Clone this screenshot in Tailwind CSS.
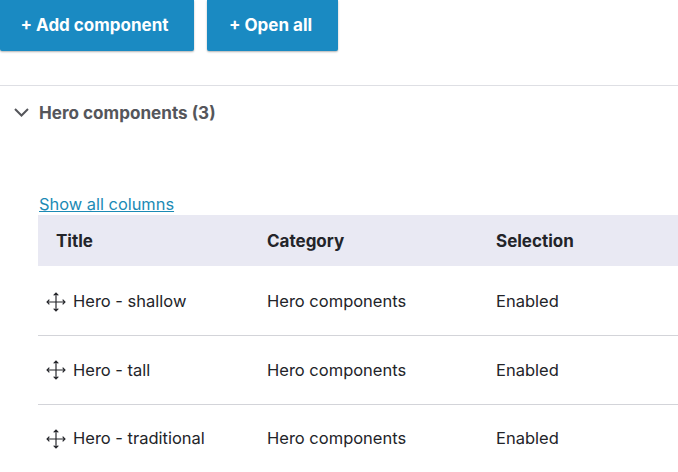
<!doctype html>
<html><head><meta charset="utf-8"><script src="https://cdn.jsdelivr.net/npm/@tailwindcss/browser@4"></script></head>
<body class="bg-white overflow-hidden font-['Inter',sans-serif] text-[#232429]">
<div class="w-[678px] h-[472px] overflow-hidden">
  <div class="flex gap-[13px] h-[85px] border-b border-[#dedfe4] box-content">
    <div class="w-[194px] h-[51px] pr-[5px] bg-[#1a8ac2] rounded-b-[2px] shadow-[0_1px_2px_rgba(0,0,0,0.3)] flex items-center justify-center text-white font-bold text-[17px]">+ Add component</div>
    <div class="w-[131px] h-[51px] pr-[4px] bg-[#1a8ac2] rounded-b-[2px] shadow-[0_1px_2px_rgba(0,0,0,0.3)] flex items-center justify-center text-white font-bold text-[17px]">+ Open all</div>
  </div>
  <div class="flex items-center h-[53px] pl-[14px] gap-[10px] text-[#55565b] font-bold text-[17px]">
    <svg width="15" height="9" viewBox="0 0 15 9" fill="none" stroke="#55565b" stroke-width="2"><path d="M1 1l6.5 6.5L14 1"/></svg>
    <span class="pt-[1px] text-[17.1px]">Hero components (3)</span>
  </div>
  <div class="pl-[38px] pt-[56px]">
    <a class="block pl-[1px] text-[16.4px] h-[20px] leading-[18px] text-[#1b8ab5] underline">Show all columns</a>
    <div class="grid grid-cols-[229px_229px_1fr] h-[51px] pt-[2px] items-center bg-[#e9e9f3] font-bold text-[17px] text-[#232429]">
      <div class="pl-[18px]">Title</div><div>Category</div><div>Selection</div>
    </div>
    <div class="grid grid-cols-[229px_229px_1fr] h-[70px] pt-[2px] items-center border-b border-[#d3d4d9] text-[16.5px]">
      <div class="flex items-center pl-[8px] gap-[7px]"><svg width="20" height="20" viewBox="0 0 19 19" fill="none" stroke="#232429" stroke-width="1.1"><path d="M9.5 1v17M1 9.5h17M7.3 3.2l2.2-2.2 2.2 2.2M7.3 15.8l2.2 2.2 2.2-2.2M3.2 7.3L1 9.5l2.2 2.2M15.8 7.3L18 9.5l-2.2 2.2"/></svg><span>Hero - shallow</span></div><div>Hero components</div><div>Enabled</div>
    </div>
    <div class="grid grid-cols-[229px_229px_1fr] h-[69px] items-center border-b border-[#d3d4d9] text-[16.5px]">
      <div class="flex items-center pl-[8px] gap-[7px]"><svg width="20" height="20" viewBox="0 0 19 19" fill="none" stroke="#232429" stroke-width="1.1"><path d="M9.5 1v17M1 9.5h17M7.3 3.2l2.2-2.2 2.2 2.2M7.3 15.8l2.2 2.2 2.2-2.2M3.2 7.3L1 9.5l2.2 2.2M15.8 7.3L18 9.5l-2.2 2.2"/></svg><span>Hero - tall</span></div><div>Hero components</div><div>Enabled</div>
    </div>
    <div class="grid grid-cols-[229px_229px_1fr] h-[67px] items-center text-[16.5px]">
      <div class="flex items-center pl-[8px] gap-[7px]"><svg width="20" height="20" viewBox="0 0 19 19" fill="none" stroke="#232429" stroke-width="1.1"><path d="M9.5 1v17M1 9.5h17M7.3 3.2l2.2-2.2 2.2 2.2M7.3 15.8l2.2 2.2 2.2-2.2M3.2 7.3L1 9.5l2.2 2.2M15.8 7.3L18 9.5l-2.2 2.2"/></svg><span>Hero - traditional</span></div><div>Hero components</div><div>Enabled</div>
    </div>
  </div>
</div>
</body></html>
